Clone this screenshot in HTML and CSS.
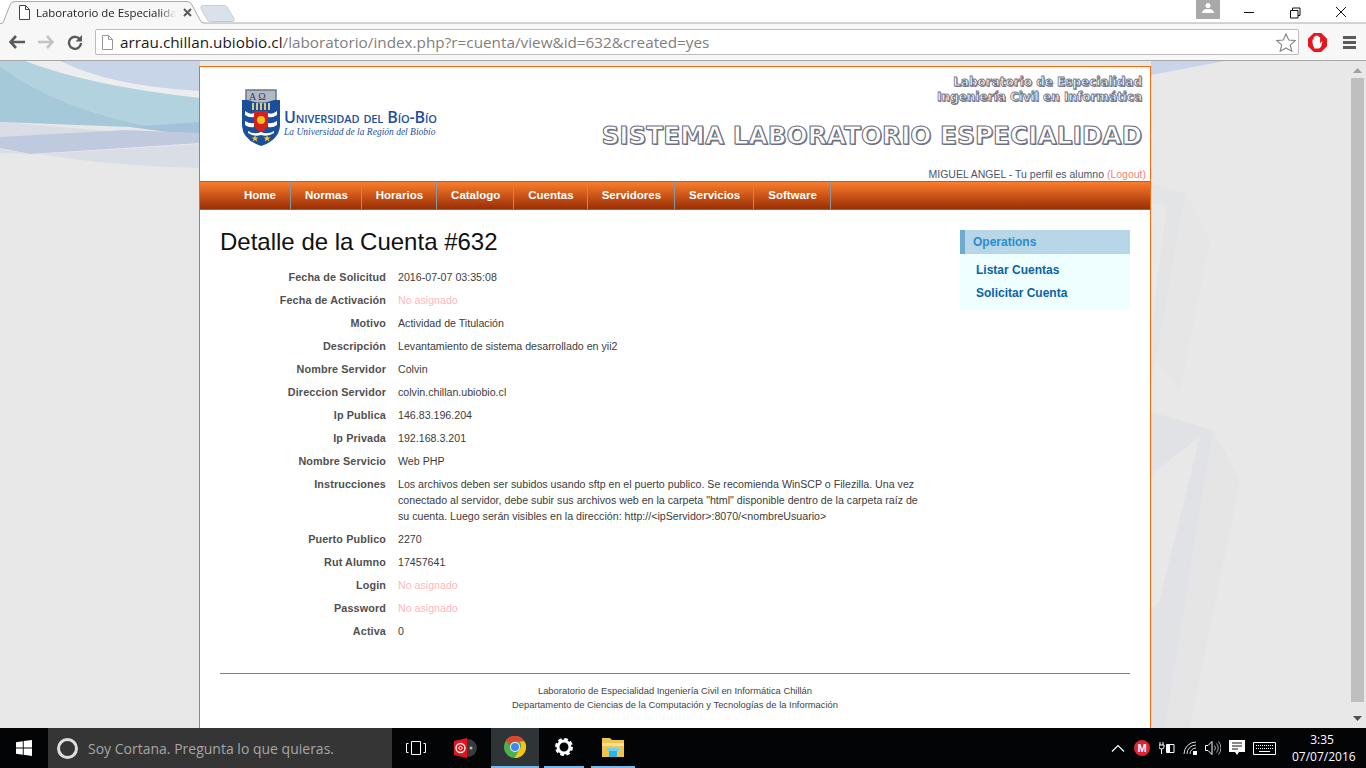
FILE: index.html
```html
<!DOCTYPE html>
<html lang="es">
<head>
<meta charset="utf-8">
<title>Laboratorio de Especialidad</title>
<link rel="stylesheet" href="styles.css">
</head>
<body>
<header class="chrome">
  <div class="tabstrip">
    <svg class="tabshape" width="1366" height="25" viewBox="0 0 1366 25">
      <path d="M203 5.5h21q3 0 4 3l6 10q1 3-2 3h-22q-2 0-3-2l-6-11q-1-3 2-3z" fill="#dbe1ea" stroke="#c9ced6"/>
      <path d="M0 23.5h1q2 0 3-3L10 5q1-3.500 5-3.500h172q4 0 5 3.500l8 15q1 3 4 3H1366V25H0z" fill="#f7f7f7"/>
      <path d="M0 23.500h1q2 0 3-3L10 5q1-3.500 5-3.500h172q4 0 5 3.500l8 15q1 3 4 3H1366" fill="none" stroke="#aaa"/>
    </svg>
    <div class="tab">
      <svg class="tab-file" width="12" height="15" viewBox="0 0 12 15"><path d="M1.500.5h6l4 4v10h-10zM7.500.5v4h4" fill="#fff" stroke="#444"/></svg>
      <span class="tab-title">Laboratorio de Especialida</span>
      <svg class="tab-close" width="9" height="9" viewBox="0 0 9 9"><path d="M1 1l7 7M8 1L1 8" stroke="#5a5a5a" stroke-width="2"/></svg>
    </div>
    <div class="winctl">
      <div class="user-badge"><svg width="12" height="12" viewBox="0 0 12 12"><circle cx="6" cy="3.500" r="2.500" fill="#fff"/><path d="M0 11q0-4 6-4t6 4z" fill="#fff"/></svg></div>
      <svg class="win-btn" width="46" height="24" viewBox="0 0 46 24"><path d="M18 12.500h10" stroke="#111"/></svg>
      <svg class="win-btn" width="46" height="24" viewBox="0 0 46 24"><path d="M18.500 10.500h7.500v7.500h-7.500zM20.500 10.500v-2.500h7.500v7.500h-2" fill="none" stroke="#111"/></svg>
      <svg class="win-btn" width="46" height="24" viewBox="0 0 46 24"><path d="M18 7l10 10M28 7l-10 10" stroke="#111"/></svg>
    </div>
  </div>
  <div class="toolbar">
    <svg class="nav-icon" width="16" height="14" viewBox="0 0 16 14"><path d="M7 1L1.500 7 7 13M2 7h14" fill="none" stroke="#5a5a5a" stroke-width="2.600"/></svg>
    <svg class="nav-icon" width="16" height="14" viewBox="0 0 16 14"><path d="M9 1l5.500 6L9 13M14 7H0" fill="none" stroke="#c4c4c4" stroke-width="2.600"/></svg>
    <svg class="nav-icon" width="16" height="16" viewBox="0 0 16 16"><path d="M13 5.500A6 6 0 1 0 14 9" fill="none" stroke="#5a5a5a" stroke-width="2.400"/><path d="M15 1v6.500H8.500z" fill="#5a5a5a"/></svg>
    <div class="omnibox">
      <svg width="11" height="15" viewBox="0 0 11 15"><path d="M.5.5h6l4 4v10H.5zM6.500.5v4h4" fill="#fff" stroke="#999"/></svg>
      <span class="url"><b>arrau.chillan.ubiobio.cl</b>/laboratorio/index.php?r=cuenta/view&amp;id=632&amp;created=yes</span>
      <svg class="star" width="20" height="19" viewBox="0 0 20 19"><path d="M10 1l2.700 6 6.500.6-4.900 4.300 1.500 6.300L10 14.900l-5.800 3.300 1.500-6.300L.8 7.600 7.300 7z" fill="#fff" stroke="#8a8a8a" stroke-width="1.200"/></svg>
    </div>
    <svg class="adblock" width="19" height="19" viewBox="0 0 19 19"><path d="M5.800 0h7.400L19 5.800v7.400L13.200 19H5.800L0 13.200V5.800z" fill="#e5161d"/><path d="M6.500 15.500Q4.500 12 4.500 9.500V6.500h1.200v3V3.800h1.600v5V2.800h1.600v6V2.800h1.600v6V4h1.600v7l1-2.200h1.400l-1.400 4.700q-1 2-2.600 2z" fill="#fff"/></svg>
    <div class="menu-icon"><span></span><span></span><span></span></div>
  </div>
</header>

<div class="viewport">
  <svg class="backdrop" width="1349" height="667" viewBox="0 0 1349 667">
    <rect width="1349" height="667" fill="#e8e8e8"/>
    <path d="M60 0H200V35Q110 25 60 0z" fill="#c8d5e8"/>
    <path d="M25 0H60Q110 25 200 30V37Q90 25 25 0z" fill="#ecedef"/>
    <path d="M0 0H25Q90 25 200 37V68L160 67Q60 50 0 5z" fill="#b1d2de"/>
    <path d="M0 5Q60 50 160 67L130 66 0 61z" fill="#a6c9da"/>
    <path d="M130 66L200 61V72L175 72z" fill="#a3c2da"/>
    <path d="M0 61L120 71 0 77z" fill="#d9dde6"/>
    <path d="M0 76L125 69 200 72V82L30 93 0 87z" fill="#c0cade"/>
    <path d="M40 93L200 83V107Q110 105 40 93z" fill="#d9dde6"/>
    <path d="M0 88L30 93 0 92z" fill="#d9dde6"/>
    <path d="M1151 0H1225L1151 14z" fill="#c8d5e8"/>
    <path d="M1185 132L1210 180 1180 330 1156 300z" fill="#e6e6e6"/>
    <path d="M1213 369L1240 420 1190 667H1165z" fill="#e5e5e5"/>
    <path d="M1151 123L1185 132 1156 300 1151 320V270L1167 144 1151 143z" fill="#e2e4e6"/>
    <path d="M1151 351L1213 369 1165 667H1151V548L1159 542 1200 375 1151 414z" fill="#e0e2e6"/>
  </svg>

  <div class="page">
    <div class="site-header">
      <div class="logo">
        <svg class="shield" width="38" height="58" viewBox="0 0 38 58">
          <path d="M4 2h30v13H4z" fill="#b3b9c4" stroke="#6c7686" stroke-width="1.500"/>
          <text class="shield-letters" x="7" y="12">Α Ω</text>
          <path d="M0 12h6l13 4 13-4h6v26q-1 14-19 20Q1 52 0 38z" fill="#1b4f9c"/>
          <path d="M3 23q5 4 9 2v4q-5 1-9-2zM35 23q-5 4-9 2v4q5 1 9-2zM3 33q5 3 9 2v4q-5 1-9-2zM35 33q-5 3-9 2v4q5 1 9-2zM6 43q6 4 13 1 7 3 13-1v2q-6 4-13 2-7 2-13-2z" fill="#fff"/>
          <path d="M12 23h14v13q-1 6-7 8-6-2-7-8z" fill="#d5201f"/>
          <circle cx="19" cy="32" r="4" fill="#f8c21c"/>
          <path d="M11 15v7M15 15v7M19 15v7M23 15v7M27 15v7" stroke="#f3d676" stroke-width="1.800"/>
          <path d="M13 47l1 2.500h2.500l-2 1.600.8 2.500-2.300-1.500-2.300 1.500.8-2.500-2-1.600h2.500zM25 47l1 2.500h2.500l-2 1.600.8 2.500-2.300-1.500-2.300 1.500.8-2.500-2-1.600h2.500z" fill="#f4c81e"/>
        </svg>
        <div class="logo-text">
          <div class="logo-name">Universidad del Bío-Bío</div>
          <div class="logo-tag">La Universidad de la Región del Biobío</div>
        </div>
      </div>
      <div class="titles">
        <div class="title-small">Laboratorio de Especialidad</div>
        <div class="title-small">Ingeniería Civil en Informática</div>
        <div class="title-big">SISTEMA LABORATORIO ESPECIALIDAD</div>
        <div class="userline">MIGUEL ANGEL - Tu perfil es alumno <a href="#">(Logout)</a></div>
      </div>
    </div>
    <nav class="mainnav">
      <a href="#">Home</a><a href="#">Normas</a><a href="#">Horarios</a><a href="#">Catalogo</a><a href="#">Cuentas</a><a href="#">Servidores</a><a href="#">Servicios</a><a href="#">Software</a>
    </nav>
    <div class="body-row">
      <main class="content">
        <h1>Detalle de la Cuenta #632</h1>
        <table class="detail">
          <tr><th>Fecha de Solicitud</th><td>2016-07-07 03:35:08</td></tr>
          <tr><th>Fecha de Activación</th><td class="null">No asignado</td></tr>
          <tr><th>Motivo</th><td>Actividad de Titulación</td></tr>
          <tr><th>Descripción</th><td>Levantamiento de sistema desarrollado en yii2</td></tr>
          <tr><th>Nombre Servidor</th><td>Colvin</td></tr>
          <tr><th>Direccion Servidor</th><td>colvin.chillan.ubiobio.cl</td></tr>
          <tr><th>Ip Publica</th><td>146.83.196.204</td></tr>
          <tr><th>Ip Privada</th><td>192.168.3.201</td></tr>
          <tr><th>Nombre Servicio</th><td>Web PHP</td></tr>
          <tr><th>Instrucciones</th><td>Los archivos deben ser subidos usando sftp en el puerto publico. Se recomienda WinSCP o Filezilla. Una vez conectado al servidor, debe subir sus archivos web en la carpeta "html" disponible dentro de la carpeta raíz de su cuenta. Luego serán visibles en la dirección: http://&lt;ipServidor&gt;:8070/&lt;nombreUsuario&gt;</td></tr>
          <tr><th>Puerto Publico</th><td>2270</td></tr>
          <tr><th>Rut Alumno</th><td>17457641</td></tr>
          <tr><th>Login</th><td class="null">No asignado</td></tr>
          <tr><th>Password</th><td class="null">No asignado</td></tr>
          <tr><th>Activa</th><td>0</td></tr>
        </table>
      </main>
      <aside class="sidebar">
        <div class="portlet-title">Operations</div>
        <ul class="portlet-list">
          <li><a href="#">Listar Cuentas</a></li>
          <li><a href="#">Solicitar Cuenta</a></li>
        </ul>
      </aside>
    </div>
    <footer class="site-footer">
      <div>Laboratorio de Especialidad Ingeniería Civil en Informática Chillán</div>
      <div>Departamento de Ciencias de la Computación y Tecnologías de la Información</div>
    </footer>
  </div>

  <div class="scrollbar">
    <svg width="9" height="5" viewBox="0 0 9 5"><path d="M4.500 0L9 5H0z" fill="#a0a0a0"/></svg>
    <div class="thumb"></div>
    <svg width="9" height="5" viewBox="0 0 9 5"><path d="M4.500 5L9 0H0z" fill="#505050"/></svg>
  </div>
</div>

<footer class="taskbar">
  <svg class="tb-win" width="16" height="16" viewBox="0 0 16 16"><path d="M0 2.300l6.800-1v6.200H0zM7.700 1.100L16 0v7.500H7.700zM0 8.500h6.800v6.200l-6.800-1zM7.700 8.500H16V16l-8.300-1.200z" fill="#fff"/></svg>
  <div class="search">
    <span class="cortana"></span>
    <span class="search-text">Soy Cortana. Pregunta lo que quieras.</span>
  </div>
  <svg class="tb-task" width="20" height="14" viewBox="0 0 20 14"><path d="M5.500.5h9v13h-9zM2.500 2.500H.5v9h2M17.500 2.500h2v9h-2" fill="none" stroke="#fff"/></svg>
  <svg class="tb-red" width="23" height="20" viewBox="0 0 23 20"><circle cx="14" cy="10" r="9" fill="#3a3a3a"/><circle cx="17" cy="10" r="1.500" fill="#bbb"/><path d="M0 3L13 0v20L0 17z" fill="#e8101a"/><circle cx="6.500" cy="10" r="4.500" fill="none" stroke="#fff" stroke-width="1.300"/><circle cx="6.500" cy="10" r="1.700" fill="none" stroke="#fff"/></svg>
  <div class="tb-item tb-active">
    <svg width="22" height="22" viewBox="0 0 22 22"><circle cx="11" cy="11" r="11" fill="#4caf50"/><path d="M11 0a11 11 0 0 1 9.500 5.500H11a5.500 5.500 0 0 0-5.300 4L2 3.700A11 11 0 0 1 11 0z" fill="#e0442f"/><path d="M20.500 5.500A11 11 0 0 1 10.500 22l5-8.500a5.500 5.500 0 0 0 0-8z" fill="#f5c518"/><circle cx="11" cy="11" r="5" fill="#fff"/><circle cx="11" cy="11" r="4" fill="#4285f4"/></svg>
  </div>
  <div class="tb-item tb-open tb-gear">
    <svg width="18" height="18" viewBox="0 0 18 18"><circle cx="9" cy="9" r="6" fill="none" stroke="#fff" stroke-width="3"/><circle cx="9" cy="9" r="7.500" fill="none" stroke="#fff" stroke-width="3" stroke-dasharray="3.500 2.390"/></svg>
  </div>
  <div class="tb-item tb-open tb-folder">
    <svg width="22" height="20" viewBox="0 0 22 20"><path d="M0 1h8l2 2h12v17H0z" fill="#f0c54f"/><path d="M0 6h22v3H0z" fill="#fbe08e"/><path d="M7 13h8v7H7z" fill="#2ab4e8"/><path d="M5 11h12v3H5z" fill="#6fd0f2"/></svg>
  </div>
  <div class="tray">
    <svg width="14" height="8" viewBox="0 0 14 8"><path d="M1 7.500l6-6 6 6" fill="none" stroke="#fff" stroke-width="1.200"/></svg>
    <span class="mega">M</span>
    <svg class="tray-plug" width="16" height="14" viewBox="0 0 16 14"><path d="M1 1v3M4 1v3M0 4h5v2q0 2-2.500 2T0 6zM2.500 8v5" fill="none" stroke="#fff"/><path d="M7.500 3.500h7.500v8H7.500z" fill="none" stroke="#fff"/><path d="M8 4h3v7H8z" fill="#fff"/></svg>
    <svg width="14" height="14" viewBox="0 0 14 14"><path d="M1 13A12 12 0 0 1 13 1M4 13a9 9 0 0 1 9-9M7 13a6 6 0 0 1 6-6" fill="none" stroke="#ddd"/><path d="M10 10h4v4h-4z" fill="#fff"/></svg>
    <svg width="16" height="14" viewBox="0 0 16 14"><path d="M.5 4.500H3l4-4v13l-4-4H.5z" fill="none" stroke="#fff"/><path d="M9.500 4.500q2 2.500 0 5M11.500 2.500q3.500 4.500 0 9M13.500.5q5 6.500 0 13" fill="none" stroke="#aaa"/></svg>
    <svg width="16" height="17" viewBox="0 0 16 17"><path d="M0 0h16v12H10l-2 3-2-3H0z" fill="#fff"/><path d="M3 3h10M3 6h10M3 9h6" stroke="#111"/></svg>
    <svg width="23" height="13" viewBox="0 0 23 13"><path d="M.5.500h22v12H.5z" fill="none" stroke="#fff"/><path d="M3 3.500h17M3 6.500h17" stroke="#fff" stroke-dasharray="1 1"/><path d="M6 9.500h11" stroke="#fff"/></svg>
    <div class="clock"><div>3:35</div><div>07/07/2016</div></div>
  </div>
</footer>
</body>
</html>
```

FILE: styles.css
```css
* { box-sizing: border-box; }
html, body { margin: 0; height: 100%; }
body {
  width: 1366px;
  height: 768px;
  overflow: hidden;
  display: flex;
  flex-direction: column;
  font-family: "Liberation Sans", Arial, sans-serif;
  background: #e8e8e8;
}
a { text-decoration: none; color: inherit; }

/* browser chrome */
.chrome { height: 61px; background: #f7f7f7; border-bottom: 1px solid #a6a6a6; flex: none; }
.tabstrip { height: 24px; position: relative; background: #fff; display: flex; justify-content: space-between; }
.tabshape { position: absolute; left: 0; top: 0; }
.tab { position: relative; display: flex; align-items: center; width: 200px; padding-left: 18px; height: 24px; }
.tab-title {
  font-family: "Open Sans", sans-serif;
  font-size: 11.400px;
  color: #222;
  width: 140px;
  margin-left: 6px;
  white-space: nowrap;
  -webkit-mask-image: linear-gradient(to right, #000 88%, transparent);
  mask-image: linear-gradient(to right, #000 88%, transparent);
}
.tab-close { margin-left: 7px; }
.winctl { position: relative; display: flex; align-items: flex-start; padding-right: 2px; }
.user-badge { width: 24px; height: 19px; background: #a9a9a9; display: flex; justify-content: center; align-items: flex-start; padding-top: 2px; margin-right: 6px; }
.win-btn { display: block; }
.toolbar { height: 36px; display: flex; align-items: center; position: relative; padding-left: 9px; }
.nav-icon { margin-right: 13px; flex: none; }
.omnibox {
  margin-left: 0;
  width: 1204px;
  height: 26px;
  background: #fff;
  border: 1px solid #bcbcbc;
  border-radius: 2px;
  display: flex;
  align-items: center;
  padding-left: 6px;
  position: relative;
  left: -1px;
}
.url { font-family: "Open Sans", sans-serif; font-size: 15.300px; color: #808080; margin-left: 7px; white-space: nowrap; flex: 1; }
.url b { font-weight: 400; color: #1a1a1a; }
.star { margin-right: 2px; }
.adblock { margin-left: 8px; flex: none; }
.menu-icon { margin-left: 16px; width: 13px; display: flex; flex-direction: column; gap: 2px; }
.menu-icon span { display: block; height: 3px; background: #5a5a5a; }

/* viewport */
.viewport { flex: 1; position: relative; overflow: hidden; display: flex; min-height: 0; }
.backdrop { position: absolute; left: 0; top: 0; }
.page {
  position: relative;
  width: 952px;
  margin: 5px 0 0 199px;
  background: #fff;
  border: 1px solid #f96a0e;
  border-bottom: 0;
  height: 700px;
  flex: none;
}
.site-header { height: 114px; display: flex; justify-content: space-between; }
.logo { display: flex; padding: 21px 0 0 42px; align-items: flex-start; }
.shield { display: block; }
.shield-letters { font-family: "Liberation Serif", serif; font-size: 10px; fill: #2c3f63; }
.logo-text { margin: 21px 0 0 4px; }
.logo-name { font-family: "Open Sans", sans-serif; font-variant: small-caps; font-size: 16px; font-weight: 600; line-height: 17px; color: #1c4f9f; white-space: nowrap; letter-spacing: -.12px; }
.logo-tag { font-family: "Liberation Serif", serif; font-style: italic; font-size: 9.500px; line-height: 12px; color: #1c4f9f; white-space: nowrap; }
.titles { text-align: right; padding: 8px 8px 0 0; display: flex; flex-direction: column; align-items: flex-end; }
.title-small, .title-big {
  font-family: "DejaVu Sans", Verdana, sans-serif;
  font-weight: 700;
  color: #fff;
  white-space: nowrap;
}
.title-small { font-size: 12px; line-height: 15px; -webkit-text-stroke: .8px #6f7280; text-shadow: 1px 1px 0 #7f83a0; }
.title-big { font-size: 24.800px; line-height: 30px; margin-top: 16px; -webkit-text-stroke: 1.100px #6f7280; text-shadow: 1px 1px 0 #6a6e90; }
.userline { font-size: 10.500px; line-height: 14px; color: #4d5568; margin: 16px -4px 0 0; white-space: nowrap; }
.userline a { color: #f0867c; }

.mainnav {
  height: 29px;
  padding-left: 30px;
  display: flex;
  background: linear-gradient(#fb7d2e, #9a2e04);
  border-top: 1px solid #cf5416;
  border-bottom: 1px solid #c45a20;
}
.mainnav a {
  padding: 0 13px 0 14px;
  font-size: 11.500px;
  font-weight: 700;
  line-height: 27px;
  color: #fff;
  border-right: 1px solid #8b97a0;
}
.mainnav a:first-child { padding-right: 14px; }

.body-row { display: flex; padding: 0 20px; }
.content { width: 740px; }
h1 { margin: 19px 0 0; font-size: 24px; font-weight: 400; line-height: 26px; color: #111; }
.detail { border-collapse: collapse; margin-top: 11px; width: 710px; font-size: 10.650px; line-height: 16px; }
.detail th { width: 172px; padding: 3px 6px 4px 0; text-align: right; vertical-align: top; color: #505050; white-space: nowrap; font-size: 10.800px; letter-spacing: .12px; }
.detail td { padding: 3px 0 4px 6px; color: #3c3c3c; vertical-align: top; }
.detail td.null { color: #ffb6c1; }
.sidebar { width: 170px; flex: none; margin-top: 20px; }
.portlet-title { height: 24px; background: #b7d6e7; border-left: 5px solid #6fabcf; padding-left: 8px; font-size: 12px; font-weight: 700; line-height: 24px; color: #298dcd; }
.portlet-list { list-style: none; margin: 0; padding: 5px 0 5px; background: #efffff; font-size: 12px; font-weight: 700; }
.portlet-list li { line-height: 23px; padding-left: 16px; color: #0c62a6; }

.site-footer {
  position: absolute;
  left: 20px;
  right: 20px;
  top: 606px;
  border-top: 1px solid #b5703f;
  padding-top: 10px;
  text-align: center;
  font-size: 9.400px;
  line-height: 14px;
  color: #444;
}

.scrollbar {
  position: absolute;
  right: 0;
  top: 0;
  bottom: 0;
  width: 17px;
  background: #e8e8e8;
  display: flex;
  flex-direction: column;
  align-items: center;
  padding-top: 7px;
}
.thumb { width: 13px; height: 624px; background: #bfbfbf; margin: 5px 0 14px; }

/* taskbar */
.taskbar { height: 40px; flex: none; background: #020406; display: flex; align-items: center; color: #fff; position: relative; }
.tb-win { margin-left: 16px; flex: none; }
.search { margin-left: 16px; width: 344px; height: 40px; background: #353535; display: flex; align-items: center; padding-left: 9px; }
.cortana { width: 21px; height: 21px; border-radius: 50%; border: 3px solid #ddd; flex: none; }
.search-text { font-family: "Open Sans", sans-serif; font-size: 14px; color: #a6a6a6; margin-left: 10px; white-space: nowrap; }
.tb-task { margin-left: 14px; flex: none; }
.tb-red { margin-left: 28px; flex: none; }
.tb-item { height: 40px; display: flex; align-items: center; justify-content: center; flex: none; }
.tb-active { margin-left: 14px; width: 48px; background: #2f3437; border-bottom: 2px solid #76b9ed; }
.tb-open { border-bottom: 2px solid #76b9ed; }
.tb-gear { margin-left: 5px; width: 40px; }
.tb-folder { margin-left: 7px; width: 44px; }
.tray { position: absolute; left: 1111px; top: 0; height: 40px; display: flex; align-items: center; gap: 8px; }
.mega { margin-left: 1px; width: 16px; height: 16px; border-radius: 50%; background: #e0242f; font-size: 11px; font-weight: 700; line-height: 16px; text-align: center; color: #fff; }
.tray-plug { margin-left: 1px; }
.clock { margin-left: 8px; text-align: center; font-family: "Open Sans", sans-serif; font-size: 12px; line-height: 17px; width: 60px; }
```
